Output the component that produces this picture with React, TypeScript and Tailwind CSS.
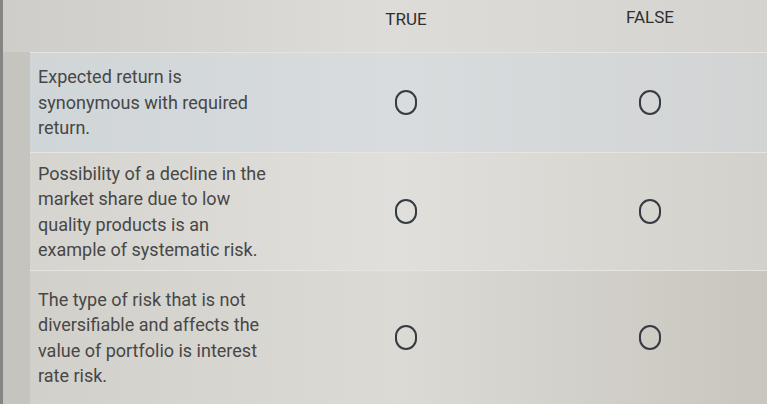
import { FC } from "react";

type Item = { lines: string[]; h: string; bg: string };

const items: Item[] = [
  {
    lines: ["Expected return is", "synonymous with required", "return."],
    h: "h-[100px]",
    bg: "bg-linear-to-r from-[#d0d5d7] via-[#d8dcde] to-[#d2d4d4]",
  },
  {
    lines: [
      "Possibility of a decline in the",
      "market share due to low",
      "quality products is an",
      "example of systematic risk.",
    ],
    h: "h-[118px]",
    bg: "bg-linear-to-r from-[#d6d4cf] via-[#e0dfdb] to-[#d3d1cb]",
  },
  {
    lines: [
      "The type of risk that is not",
      "diversifiable and affects the",
      "value of portfolio is interest",
      "rate risk.",
    ],
    h: "h-[134px]",
    bg: "bg-linear-to-r from-[#d2d0ca] via-[#dcdad5] to-[#c9c6bf]",
  },
];

const Radio: FC = () => (
  <span className="block w-[22px] h-[25px] rounded-full border-[2.5px] border-[#363a42]" />
);

export default function App() {
  return (
    <div
      className="w-[767px] h-[404px] overflow-hidden flex flex-col bg-[#c6c4bf] border-l-[3px] border-[#858583]"
      style={{ fontFamily: "Roboto, 'Liberation Sans', sans-serif" }}
    >
      <header className="h-[52px] shrink-0 grid grid-cols-[281px_244px_244px] bg-linear-to-r from-[#cfcdc9] via-[#dddcd8] to-[#d5d3cf] text-[#2f2f2f] text-[17px]">
        <div />
        <div className="flex justify-center pt-[7px]">TRUE</div>
        <div className="flex justify-center pt-[5px]">FALSE</div>
      </header>
      {items.map((it, idx) => (
        <section
          key={idx}
          className={`${it.h} shrink-0 ml-[27px] grid grid-cols-[254px_244px_244px] items-center border-t border-[#e6e5e2] ${it.bg}`}
        >
          <p className="pl-[8px] text-[18px] leading-[25.5px] text-[#474747]">
            {it.lines.map((l, i) => (
              <span key={i} className="block whitespace-nowrap">
                {l}
              </span>
            ))}
          </p>
          <div className="flex justify-center">
            <Radio />
          </div>
          <div className="flex justify-center">
            <Radio />
          </div>
        </section>
      ))}
    </div>
  );
}
